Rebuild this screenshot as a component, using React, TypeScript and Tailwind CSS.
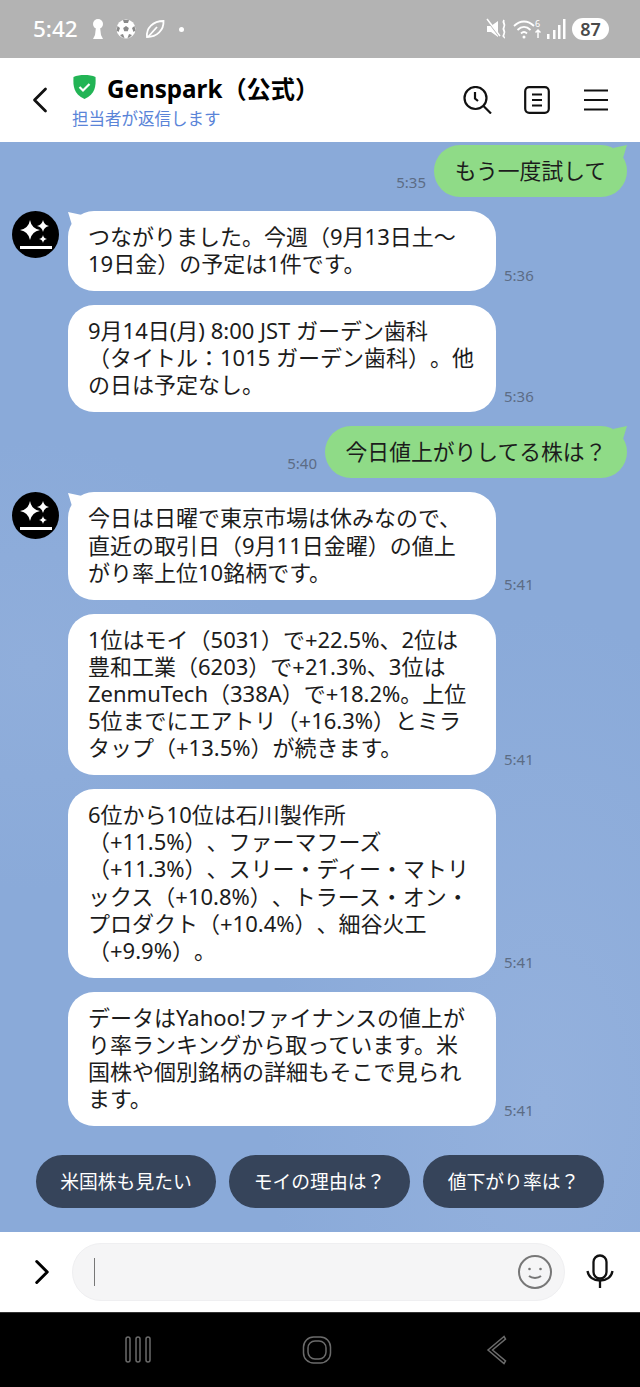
import type { ReactNode } from 'react';
import { ChevronLeft, ChevronRight } from 'lucide-react';

const FONT = 'font-["Noto_Sans","Noto_Sans_CJK_JP",sans-serif] [text-spacing-trim:space-all]';

type Msg = { lines: string[]; time: string; avatar?: boolean };

function Avatar() {
  return (
    <svg width="47" height="47" viewBox="0 0 47 47" className="absolute left-[-56px] top-0">
      <circle cx="23.5" cy="23.5" r="23.5" fill="#000" />
      <path d="M18 9 Q19.500 17.500 28 19 Q19.500 20.500 18 29 Q16.500 20.500 8 19 Q16.500 17.500 18 9z" fill="#fff" />
      <path d="M31 9 Q32 14 37 15 Q32 16 31 21 Q30 16 25 15 Q30 14 31 9z" fill="#fff" />
      <path d="M31 24 Q31.600 27.400 35 28 Q31.600 28.600 31 32 Q30.400 28.600 27 28 Q30.400 27.400 31 24z" fill="#fff" />
      <rect x="8" y="35" width="32" height="3" fill="#fff" />
    </svg>
  );
}

function Left({ lines, time, avatar }: Msg) {
  return (
    <div className="flex items-end pl-[68px]">
      <div className="relative w-[428px] rounded-[26px] bg-white px-5 pb-[14px] pt-[12px] text-[22px] leading-[27.1px] text-[#1c1c1c]">
        {avatar && <Avatar />}
        {avatar && (
          <svg width="14" height="14" viewBox="0 0 14 14" className="absolute left-0 top-[1px]">
            <path d="M0 0 L14 3 L4 13 Z" fill="#fff" />
          </svg>
        )}
        {lines.map(l => (
          <div key={l} className="whitespace-nowrap">{l}</div>
        ))}
      </div>
      <span className="mb-[7px] ml-2 text-[15px] leading-[18px] text-[#5c6c85]">{time}</span>
    </div>
  );
}

function Right({ text, time, width }: { text: string; time: string; width: string }) {
  return (
    <div className="flex items-end justify-end pr-[13px]">
      <span className="mb-[6px] mr-2 text-[15px] leading-[18px] text-[#5c6c85]">{time}</span>
      <div className={`relative flex h-[52px] items-center justify-center rounded-[26px] bg-[#8fdb87] text-[21.8px] text-[#1c1c1c] ${width}`}>
        <svg width="14" height="14" viewBox="0 0 14 14" className="absolute right-0 top-0">
          <path d="M14 0 L0 3 L10 13 Z" fill="#8fdb87" />
        </svg>
        {text}
      </div>
    </div>
  );
}

function Chip({ children, width }: { children: ReactNode; width: string }) {
  return (
    <div className={`flex h-[53px] items-center justify-center rounded-full bg-[#36445a] text-[18.800px] text-white ${width}`}>
      {children}
    </div>
  );
}

export default function App() {
  return (
    <div className={`flex h-[1387px] w-[640px] flex-col overflow-hidden bg-black ${FONT}`}>
      {/* Status bar */}
      <div className="flex h-[58px] flex-none items-center justify-between bg-[#b3b3b3] pl-[33px] pr-[31px] text-white">
        <div className="flex items-center">
          <span className="text-[22.500px] font-medium">5:42</span>
          <svg width="14" height="22" viewBox="0 0 14 22" className="ml-[13px]">
            <circle cx="7" cy="6" r="5" fill="#fff" />
            <path d="M5 9h4l1 8 2 4H2l2-4z" fill="#fff" />
          </svg>
          <svg width="20" height="20" viewBox="0 0 20 20" className="ml-[11px]">
            <circle cx="10" cy="10" r="9.500" fill="#fff" />
            <path d="M10 7l2.800 2-1 3.300H8.200l-1-3.300z" fill="#8a8a8a" />
            <path d="M1.500 7l2.500 2-1.500 4-2-1.500zM18.500 7l-2.500 2 1.500 4 2-1.500zM7 1h6l-1 3H8zM4 16l3-1 1.500 4-2-.5zM16 16l-3-1-1.500 4 2-.5z" fill="#8a8a8a" />
          </svg>
          <svg width="20" height="20" viewBox="0 0 20 20" fill="none" stroke="#fff" strokeWidth="1.800" className="ml-[9px]">
            <path d="M2 18C1 9 8 2 18.500 2c.5 9-6.500 16-16.500 16z" />
            <path d="M3 18 12 8" />
          </svg>
          <span className="ml-[14px] h-[5px] w-[5px] rounded-full bg-white" />
        </div>
        <div className="flex items-center gap-[5px]">
          <svg width="22" height="22" viewBox="0 0 22 22">
            <path d="M1 8h4l7-5v16l-7-5H1z" fill="#fff" />
            <path d="M1 2l13 17" stroke="#b3b3b3" strokeWidth="2" />
            <path d="M1 1l13 17" stroke="#fff" strokeWidth="1.500" />
            <path d="M18 2c-2 3 2 4 0 7s2 4 0 7 1 3 0 4" stroke="#fff" strokeWidth="1.800" fill="none" />
          </svg>
          <svg width="28" height="22" viewBox="0 0 28 22" fill="none" stroke="#fff" strokeWidth="1.800">
            <path d="M1 8c6-6 14-6 20 0" />
            <path d="M4.500 12c4-4 9-4 13 0" />
            <path d="M8 15.500c2-2 4-2 6 0" />
            <circle cx="11" cy="19" r="1.500" fill="#fff" stroke="none" />
            <path d="M25 20v-8M22.500 14.500 25 12l2.500 2.500" strokeWidth="1.500" />
            <text x="22" y="9" fontSize="9" fill="#fff" stroke="none">6</text>
          </svg>
          <svg width="20" height="20" viewBox="0 0 20 20" fill="#fff">
            <rect x="1" y="15" width="2.500" height="5" />
            <rect x="7" y="11" width="2.500" height="9" />
            <rect x="12" y="6" width="2.500" height="14" />
            <rect x="17" y="0" width="2.500" height="20" />
          </svg>
          <div className="ml-[1px] flex h-[22px] w-[37px] items-center justify-center rounded-full bg-white text-[18px] font-semibold text-[#4a4a4a]">87</div>
        </div>
      </div>

      {/* Header */}
      <div className="flex h-[84px] flex-none items-center bg-white">
        <ChevronLeft size={44} strokeWidth={1.500} className="ml-[18px] flex-none text-[#111]" />
        <div className="ml-[10px] flex flex-col pt-[2px]">
          <div className="flex items-center gap-[10px] leading-[34px]">
            <svg width="25" height="26" viewBox="0 0 25 26" className="mb-[4px]">
              <path d="M12.500 1c4 0 8 .5 11 2 .5 9 0 17-11 22C1.500 20 1 12 1.500 3c3-1.500 7-2 11-2z" fill="#22b455" />
              <path d="M7.500 13l3.500 3.500 6.500-6.500" fill="none" stroke="#fff" strokeWidth="2.200" />
            </svg>
            <span className="text-[24.200px] font-bold text-black">Genspark（公式）</span>
          </div>
          <span className="mt-[2px] text-[16.500px] leading-[22px] text-[#5a84d8]">担当者が返信します</span>
        </div>
        <div className="ml-auto mr-[32px] flex items-center">
          <svg width="29" height="28" viewBox="0 0 29 28" fill="none" stroke="#111" strokeWidth="2.200">
            <circle cx="12.500" cy="12" r="11" />
            <path d="M12 6v6.500l3 2.500" />
            <path d="M20.500 20l7.500 7.500" />
          </svg>
          <svg width="26" height="28" viewBox="0 0 26 28" fill="none" stroke="#111" strokeWidth="2.200" className="ml-[32px]">
            <rect x="1.200" y="1.200" width="23.600" height="25.600" rx="4" />
            <path d="M8 8.500h10M8 14h10M8 19.500h10" />
          </svg>
          <svg width="24" height="22" viewBox="0 0 24 22" fill="none" stroke="#111" strokeWidth="2.200" className="ml-[34px]">
            <path d="M0 1.500h24M0 11h24M0 20.500h24" />
          </svg>
        </div>
      </div>

      {/* Chat */}
      <div className="flex h-[1090px] flex-none flex-col gap-[14px] bg-[#8aaad9] bg-[radial-gradient(ellipse_at_85%_88%,#94b1dd_0%,#8aaad900_36%),radial-gradient(ellipse_at_5%_48%,#90aedb_0%,#8aaad900_28%)] pt-[3px]">
        <Right text="もう一度試して" time="5:35" width="w-[193px]" />
        <Left avatar time="5:36" lines={['つながりました。今週（9月13日土～', '19日金）の予定は1件です。']} />
        <Left time="5:36" lines={['9月14日(月) 8:00 JST ガーデン歯科', '（タイトル：1015 ガーデン歯科）。他', 'の日は予定なし。']} />
        <Right text="今日値上がりしてる株は？" time="5:40" width="w-[302px]" />
        <Left avatar time="5:41" lines={['今日は日曜で東京市場は休みなので、', '直近の取引日（9月11日金曜）の値上', 'がり率上位10銘柄です。']} />
        <Left time="5:41" lines={['1位はモイ（5031）で+22.5%、2位は', '豊和工業（6203）で+21.3%、3位は', 'ZenmuTech（338A）で+18.2%。上位', '5位までにエアトリ（+16.3%）とミラ', 'タップ（+13.5%）が続きます。']} />
        <Left time="5:41" lines={['6位から10位は石川製作所', '（+11.5%）、ファーマフーズ', '（+11.3%）、スリー・ディー・マトリ', 'ックス（+10.8%）、トラース・オン・', 'プロダクト（+10.4%）、細谷火工', '（+9.9%）。']} />
        <Left time="5:41" lines={['データはYahoo!ファイナンスの値上が', 'り率ランキングから取っています。米', '国株や個別銘柄の詳細もそこで見られ', 'ます。']} />
        <div className="mt-[15px] flex gap-[13px] pl-[36px]">
          <Chip width="w-[180px]">米国株も見たい</Chip>
          <Chip width="w-[181px]">モイの理由は？</Chip>
          <Chip width="w-[181px]">値下がり率は？</Chip>
        </div>
      </div>

      {/* Input bar */}
      <div className="flex h-[80px] flex-none items-center bg-white">
        <ChevronRight size={42} strokeWidth={1.700} className="ml-[21px] flex-none text-black" />
        <div className="ml-[9px] flex h-[58px] w-[493px] flex-none items-center rounded-full border border-[#efeff1] bg-[#f5f5f6] pl-[21px] pr-[11px]">
          <div className="h-[28px] w-[1px] bg-[#777]" />
          <svg width="36" height="36" viewBox="0 0 36 36" fill="none" stroke="#777" strokeWidth="2" className="ml-auto">
            <circle cx="18" cy="18" r="16" />
            <circle cx="12.500" cy="15" r="1.300" fill="#777" stroke="none" />
            <circle cx="23.500" cy="15" r="1.300" fill="#777" stroke="none" />
            <path d="M12 22c3 2.500 9 2.500 12 0" />
          </svg>
        </div>
        <svg width="28" height="36" viewBox="0 0 28 36" fill="none" stroke="#111" strokeWidth="2.300" className="ml-[21px] flex-none">
          <rect x="7.500" y="1.500" width="13" height="23" rx="6.500" />
          <path d="M1.500 17c1 6 6 9.500 12.500 9.500S25.500 23 26.500 17" />
          <path d="M14 26v8" />
        </svg>
      </div>

      {/* Nav bar */}
      <div className="flex flex-1 items-center border-t border-[#333] bg-black">
        <svg width="30" height="30" viewBox="0 0 30 30" fill="none" stroke="#6b6b6b" strokeWidth="1.500" className="ml-[123px]">
          <rect x="3" y="2" width="4" height="25" rx="2" />
          <rect x="13" y="2" width="4" height="25" rx="2" />
          <rect x="23" y="2" width="4" height="25" rx="2" />
        </svg>
        <svg width="30" height="30" viewBox="0 0 30 30" fill="none" stroke="#6b6b6b" strokeWidth="1.500" className="ml-[149px]">
          <rect x="1.500" y="2" width="27" height="26" rx="10" />
          <rect x="6" y="6" width="18" height="18" rx="7" />
        </svg>
        <svg width="22" height="30" viewBox="0 0 22 30" fill="none" stroke="#6b6b6b" strokeWidth="1.500" className="ml-[154px]">
          <path d="M18 1.500 2 15l16 13.500 1.500-2.500L6.500 15 19.500 4z" />
        </svg>
      </div>
    </div>
  );
}
